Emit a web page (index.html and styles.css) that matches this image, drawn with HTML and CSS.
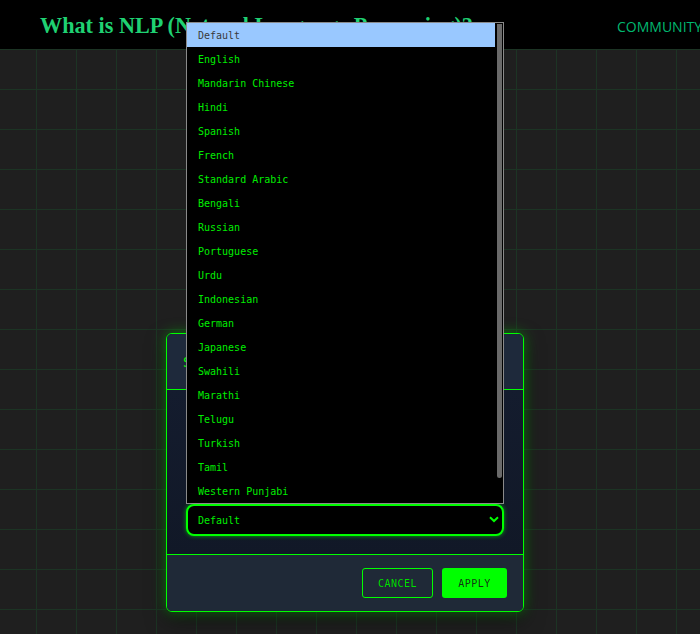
FILE: index.html
```html
<!DOCTYPE html>
<html lang="en">
<head>
<meta charset="utf-8">
<title>What is NLP</title>
<link rel="stylesheet" href="styles.css">
</head>
<body>
<header class="site-header">
  <h1 class="site-title">What is NLP (Natural Language Processing)?</h1>
  <nav class="site-nav">
    <a class="nav-link" href="#">COMMUNITY</a>
  </nav>
</header>
<main class="page"></main>

<div class="overlay">
  <div class="modal">
    <div class="modal-head">
      <h2 class="modal-title">Select Language</h2>
    </div>
    <div class="modal-body">
      <div class="select">
        <span class="select-value">Default</span>
        <svg class="chevron" width="10" height="7" viewBox="0 0 10 7"><path d="M1 1.2 L5 5 L9 1.2" fill="none" stroke="#00ff00" stroke-width="2"/></svg>
      </div>
    </div>
    <div class="modal-foot">
      <button class="btn btn-cancel">CANCEL</button>
      <button class="btn btn-apply">APPLY</button>
    </div>
  </div>
</div>

<div class="listbox">
  <ul class="options">
    <li class="option selected">Default</li>
    <li class="option">English</li>
    <li class="option">Mandarin Chinese</li>
    <li class="option">Hindi</li>
    <li class="option">Spanish</li>
    <li class="option">French</li>
    <li class="option">Standard Arabic</li>
    <li class="option">Bengali</li>
    <li class="option">Russian</li>
    <li class="option">Portuguese</li>
    <li class="option">Urdu</li>
    <li class="option">Indonesian</li>
    <li class="option">German</li>
    <li class="option">Japanese</li>
    <li class="option">Swahili</li>
    <li class="option">Marathi</li>
    <li class="option">Telugu</li>
    <li class="option">Turkish</li>
    <li class="option">Tamil</li>
    <li class="option">Western Punjabi</li>
  </ul>
  <div class="scrolltrack"><div class="scrollthumb"></div></div>
</div>
</body>
</html>
```

FILE: styles.css
```css
* { box-sizing: border-box; }
html, body { margin: 0; padding: 0; height: 100%; }
body {
  background-color: #1f1f1f;
  background-image:
    linear-gradient(to right, #1c3424 1px, transparent 1px),
    linear-gradient(to bottom, #1c3424 1px, transparent 1px);
  background-size: 40px 40px;
  background-position: -4px 9px;
  overflow: hidden;
  font-family: "DejaVu Sans Mono", monospace;
}
.site-header {
  height: 49px;
  background: #000;
  display: flex;
  align-items: center;
  padding-left: 40px;
  padding-top: 3px;
  overflow: hidden;
  white-space: nowrap;
}
.site-title {
  flex: 0 0 577px;
  margin: 0;
  font-family: "Liberation Serif", serif;
  font-weight: bold;
  font-size: 22.2px;
  color: #1fd172;
}
.site-nav { display: flex; gap: 24px; flex: none; }
.nav-link {
  font-family: "Open Sans", "Liberation Sans", sans-serif;
  font-size: 14px;
  color: #00b870;
  text-decoration: none;
}
.page { height: calc(100% - 49px); }

.overlay {
  position: fixed;
  inset: 0;
  display: flex;
  justify-content: flex-start;
  align-items: flex-start;
  padding: 333px 0 0 166px;
}
.modal {
  width: 358px;
  border: 1px solid #00ff00;
  border-radius: 6px;
  overflow: hidden;
  box-shadow: 0 0 14px rgba(0, 255, 0, 0.4), 0 8px 20px rgba(0, 0, 0, 0.5);
  background: #111827;
}
.modal-head {
  height: 56px;
  background: #1e293b;
  border-bottom: 1px solid #00ff00;
  display: flex;
  align-items: center;
  padding-left: 16px;
}
.modal-title {
  margin: 0;
  font-size: 14px;
  color: #00ff00;
  font-weight: normal;
}
.modal-body {
  height: 165px;
  padding: 20px 19px 18px;
  display: flex;
  flex-direction: column;
  justify-content: flex-end;
  background: linear-gradient(#141c2e, #111827);
  border-bottom: 1px solid #00ff00;
}
.select {
  height: 32px;
  background: #000;
  border: 2px solid #00ff00;
  border-radius: 8px;
  box-shadow: 0 0 4px rgba(0, 255, 0, 0.6);
  display: flex;
  align-items: center;
  justify-content: space-between;
  padding: 0 3px 0 10px;
}
.select-value { font-size: 10px; color: #00ee00; }
.chevron { display: block; margin-top: -1px; }
.modal-foot {
  height: 56px;
  background: #1f2937;
  display: flex;
  justify-content: flex-end;
  align-items: center;
  gap: 9px;
  padding-right: 16px;
}
.btn {
  height: 30px;
  font-family: "DejaVu Sans Mono", monospace;
  font-size: 10px;
  letter-spacing: 0.5px;
  border-radius: 3px;
  cursor: pointer;
}
.btn-cancel {
  width: 71px;
  background: transparent;
  border: 1px solid #00ff00;
  color: #00e000;
}
.btn-apply {
  width: 65px;
  background: #00ff00;
  border: none;
  color: #133313;
}

.listbox {
  position: absolute;
  left: 186px;
  top: 22px;
  width: 318px;
  height: 482px;
  background: #000;
  border: 1px solid #8a8a8a;
  display: flex;
}
.options {
  list-style: none;
  margin: 0;
  padding: 0;
  flex: 1;
}
.option {
  height: 24px;
  line-height: 24px;
  padding: 1px 0 0 11px;
  font-size: 10px;
  color: #00ee00;
}
.option.selected { background: #99c8ff; color: #3a3a3a; }
.scrolltrack {
  width: 8px;
  padding: 1px 1px 0 2px;
}
.scrollthumb {
  height: 454px;
  background: #6a6a6a;
  border-radius: 0 0 3px 3px;
}
```
